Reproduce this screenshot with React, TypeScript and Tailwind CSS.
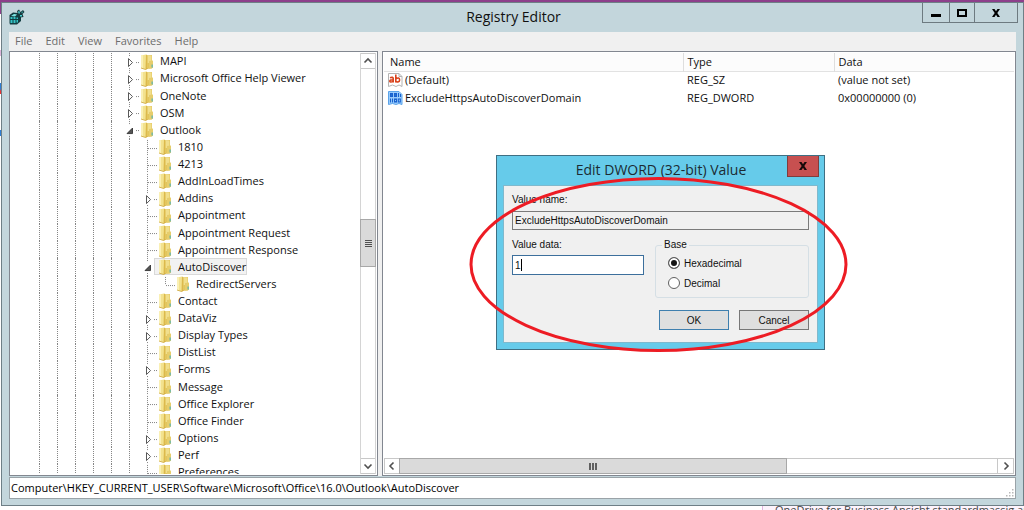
import { useState } from "react";
import type { ReactNode } from "react";

type Kind = "closed" | "open" | "leaf";
type Node = { name: string; level: number; kind: Kind; selected?: boolean; last?: boolean };

const nodes: Node[] = [
  { name: "MAPI", level: 0, kind: "closed" },
  { name: "Microsoft Office Help Viewer", level: 0, kind: "closed" },
  { name: "OneNote", level: 0, kind: "closed" },
  { name: "OSM", level: 0, kind: "closed" },
  { name: "Outlook", level: 0, kind: "open" },
  { name: "1810", level: 1, kind: "leaf" },
  { name: "4213", level: 1, kind: "leaf" },
  { name: "AddInLoadTimes", level: 1, kind: "leaf" },
  { name: "Addins", level: 1, kind: "closed" },
  { name: "Appointment", level: 1, kind: "leaf" },
  { name: "Appointment Request", level: 1, kind: "leaf" },
  { name: "Appointment Response", level: 1, kind: "leaf" },
  { name: "AutoDiscover", level: 1, kind: "open", selected: true },
  { name: "RedirectServers", level: 2, kind: "leaf", last: true },
  { name: "Contact", level: 1, kind: "leaf" },
  { name: "DataViz", level: 1, kind: "closed" },
  { name: "Display Types", level: 1, kind: "closed" },
  { name: "DistList", level: 1, kind: "leaf" },
  { name: "Forms", level: 1, kind: "closed" },
  { name: "Message", level: 1, kind: "leaf" },
  { name: "Office Explorer", level: 1, kind: "leaf" },
  { name: "Office Finder", level: 1, kind: "leaf" },
  { name: "Options", level: 1, kind: "closed" },
  { name: "Perf", level: 1, kind: "closed" },
  { name: "Preferences", level: 1, kind: "leaf" },
];

const values = [
  { name: "(Default)", type: "REG_SZ", data: "(value not set)", text: true },
  { name: "ExcludeHttpsAutoDiscoverDomain", type: "REG_DWORD", data: "0x00000000 (0)", text: false },
];

function Guide() {
  return (
    <span className="flex w-[18px] shrink-0 justify-center">
      <span className="border-l border-dotted border-[#858585]" />
    </span>
  );
}

function Joint({ kind, last }: { kind: Kind; last?: boolean }) {
  return (
    <svg className="h-full w-5 shrink-0" viewBox="0 1 20 17" aria-hidden="true">
      <g stroke="#858585" strokeDasharray="1 1" fill="none">
        {kind === "leaf" ? (
          <>
            <path d={last ? "M9.500 0V10" : "M9.500 0V19"} />
            <path d="M10 10.500H20" />
          </>
        ) : (
          <>
            <path d="M9.500 1V4M9.500 16V19" />
            <path d="M16 10.500H20" />
          </>
        )}
      </g>
      {kind === "closed" && <path d="M8.500 6.500V14.500L12.500 10.500Z" fill="#fff" stroke="#595959" />}
      {kind === "open" && <path d="M12.500 8V13.500H7Z" fill="#555" stroke="#262626" strokeWidth="0.800" />}
    </svg>
  );
}

function Folder() {
  return (
    <svg className="h-4 w-3.5 shrink-0" viewBox="0 0 14 16" aria-hidden="true">
      <path d="M5 1.500L12 1V14.500L5 15Z" fill="#e3c65c" />
      <path d="M6.500 1.500H11.500V9H6.500Z" fill="#f1df8d" />
      <path d="M1 1.500L6 0.500L7.500 1.500V14.500L5.500 15.500L1 14Z" fill="#f3e28e" />
      <path d="M1 1.500L3 1V14.500L1 14Z" fill="#faf0b4" />
      <path d="M6 0.500L7.500 1.500V14.500L5.500 15.500Z" fill="#dcb94c" />
      <path d="M1 14L5.500 15.500L7.500 14.500" stroke="#cba53b" fill="none" strokeWidth="0.800" />
      <path d="M9 7L13 6.500V14L9 14.500Z" fill="#e6cd6c" />
      <path d="M11.500 10.500H12.800V13.500H11.500Z" fill="#63b6b0" />
    </svg>
  );
}

function Chevron({ d }: { d: string }) {
  return (
    <svg className="size-2.5" viewBox="0 0 10 10" fill="none" stroke="#505050" strokeWidth="1.600" aria-hidden="true">
      <path d={d} />
    </svg>
  );
}

function ValueIcon({ text }: { text: boolean }) {
  return text ? (
    <svg className="size-4 shrink-0" viewBox="0 0 16 16" aria-hidden="true">
      <path d="M1.500 1.500H12L15 4.500V14.500L12 13L9 14.500L5.500 13L1.500 14.500Z" fill="#fff" stroke="#b4b4b4" />
      <path d="M12 1.500V4.500H15" fill="none" stroke="#b4b4b4" />
      <g fill="none" stroke="#d9421c" strokeWidth="1.600">
        <path d="M3 5.800Q6.200 4.600 6.200 6.600V10.500M6.200 7.800Q2.800 7.600 2.800 9.200Q3.200 10.800 6.200 9.400" />
        <path d="M8.800 2.500V10.500M8.800 6.800Q12.600 4.600 12.600 8Q12.400 11 8.800 9.400" />
      </g>
    </svg>
  ) : (
    <svg className="size-4 shrink-0" viewBox="0 0 16 16" aria-hidden="true">
      <path d="M1.500 1.500H12L15 4.500V14.500L12 13.500L9 14.500L5.500 13.500L1.500 14.500Z" fill="#9fd0fd" stroke="#5aa3ea" />
      <g fill="none" stroke="#1762cf" strokeWidth="1.100">
        <rect x="3.500" y="3.500" width="2" height="3" />
        <rect x="7.500" y="3.500" width="2" height="3" />
        <path d="M11.500 3V7M13.500 4V7M3.500 8.500V12.500M5.500 8.500V12.500" />
        <rect x="7.500" y="9" width="2" height="3" />
        <rect x="11.300" y="9" width="2" height="3" />
      </g>
    </svg>
  );
}

function RegeditIcon() {
  return (
    <svg className="size-4" viewBox="0 0 16 16" aria-hidden="true">
      <path d="M0.500 6L4 3.500L9 4L12 7V12L8 15.500H1L0.500 14Z" fill="#123c40" />
      <path d="M2 7L5 5L8 5.500L6 7.500Z" fill="#7fe6e4" />
      <path d="M1.500 8H3.500V10H1.500ZM4.500 8H6.500V10H4.500ZM1.500 11H3.500V14H1.500ZM4.500 11H6.500V14H4.500ZM7.500 8.500H9V10H7.500ZM7.500 11H9V13.500H7.500Z" fill="#35c4c6" />
      <path d="M8 2L10 0.500L11.500 3L14 1L15.500 3L13.500 5L14.500 8L11.500 8.500L9 6Z" fill="#173a3e" />
      <path d="M9 2.500L10.500 2L11 4.500L9.500 4.500ZM12.500 3L14 2.500L13 4.500ZM11 6H13V7.500H11Z" fill="#4ccfd0" />
    </svg>
  );
}

function CaptionButton({ label, className, children }: { label: string; className: string; children: ReactNode }) {
  return (
    <button type="button" aria-label={label} className={`flex items-center justify-center ${className}`}>
      {children}
    </button>
  );
}

function Tree() {
  return (
    <div className="flex w-[369px] shrink-0 border border-[#828790] bg-white p-px">
      <div className="min-h-0 min-w-0 flex-1 overflow-hidden">
        <ul className="grid h-[428px] auto-rows-fr pl-[19px]">
          {nodes.map((n) => (
            <li key={n.name} className="flex min-h-0 items-center">
              <span className="flex self-stretch">
                {Array.from({ length: 5 + n.level }, (_, i) => (
                  <Guide key={i} />
                ))}
              </span>
              <Joint kind={n.kind} last={n.last} />
              <span
                className={
                  n.selected
                    ? "-ml-1 flex h-[17px] items-center border border-[#d9d9d9] bg-[#f2f2f2] pl-[3px]"
                    : "flex h-[17px] items-center"
                }
              >
                <Folder />
                <span className="ml-1.5 whitespace-nowrap">{n.name}</span>
              </span>
            </li>
          ))}
        </ul>
      </div>
      <div className="flex w-4 shrink-0 flex-col border-x border-[#d4d4d4]">
        <div className="flex h-4 items-center justify-center border-y border-[#c8c8c8]">
          <Chevron d="M1.500 6.500L5 3L8.500 6.500" />
        </div>
        <div className="grow-[15]" />
        <div className="-mx-px flex h-12 flex-col items-center justify-center gap-px border border-[#a8a8a8] bg-[#dadada]">
          <i className="h-px w-[7px] bg-[#505050]" />
          <i className="h-px w-[7px] bg-[#505050]" />
          <i className="h-px w-[7px] bg-[#505050]" />
          <i className="h-px w-[7px] bg-[#505050]" />
        </div>
        <div className="grow-[19]" />
        <div className="flex h-4 items-center justify-center border-y border-[#c8c8c8]">
          <Chevron d="M1.500 3.500L5 7L8.500 3.500" />
        </div>
      </div>
    </div>
  );
}

function ValueList() {
  return (
    <div className="flex min-w-0 flex-1 flex-col border border-[#828790] bg-white p-px">
      <table className="w-full table-fixed text-left">
        <thead>
          <tr className="h-[18px] border-b border-[#e2e2e2] bg-[#fcfcfc]">
            <th className="w-[299px] border-r border-[#dedede] pl-1.5 font-normal">Name</th>
            <th className="w-[151px] border-r border-[#dedede] pl-1 font-normal">Type</th>
            <th className="pl-1 font-normal">Data</th>
          </tr>
        </thead>
        <tbody>
          {values.map((v) => (
            <tr key={v.name} className="h-[18px]">
              <td className="pl-[3px]">
                <span className="flex items-center gap-0.5">
                  <ValueIcon text={v.text} />
                  {v.name}
                </span>
              </td>
              <td className="pl-1">{v.type}</td>
              <td className="pl-1">{v.data}</td>
            </tr>
          ))}
        </tbody>
      </table>
      <div className="mt-auto flex h-4 border border-[#c8c8c8]">
        <div className="flex w-3.5 items-center justify-center">
          <Chevron d="M6.500 1.500L3 5L6.500 8.500" />
        </div>
        <div className="-my-px flex grow-[384] items-center justify-center gap-px border border-[#a8a8a8] bg-[#dadada]">
          <i className="h-[7px] w-0.5 bg-[#606060]" />
          <i className="h-[7px] w-0.5 bg-[#606060]" />
          <i className="h-[7px] w-0.5 bg-[#606060]" />
        </div>
        <div className="grow-[214]" />
        <div className="flex w-4 items-center justify-center border-l border-[#c8c8c8]">
          <Chevron d="M3.500 1.500L7 5L3.500 8.500" />
        </div>
      </div>
    </div>
  );
}

function EditDialog() {
  const [base, setBase] = useState("Hexadecimal");
  return (
    <div
      role="dialog"
      aria-labelledby="dialog-title"
      className="absolute top-[152px] left-[494px] w-[329px] border border-[#3f6f83] bg-[#66cbea] px-1.5 pb-1.5"
    >
      <header className="-mr-px flex h-[29px] items-start">
        <span className="w-8 shrink-0" />
        <h2 id="dialog-title" className="flex-1 pt-1 text-center text-[14px] leading-5 text-[#1c2b33]">
          Edit DWORD (32-bit) Value
        </h2>
        <CaptionButton label="Close" className="h-[21px] w-8 border border-t-0 border-[#803c3c] bg-[#c75050]">
          <svg className="size-2.5" viewBox="0 0 10 10" aria-hidden="true">
            <path d="M1 1H3.500L5 3.300L6.500 1H9L6.300 5L9 9H6.500L5 6.700L3.500 9H1L3.700 5Z" fill="#150808" />
          </svg>
        </CaptionButton>
      </header>
      <form
        onSubmit={(e) => e.preventDefault()}
        className="border border-[#7fb9cd] bg-[#f0f0f0] px-2 pt-1.5 pb-3 font-['Liberation_Sans',Arial,sans-serif] text-[10px] text-[#101010]"
      >
        <label htmlFor="value-name" className="block leading-4">Value name:</label>
        <input
          id="value-name"
          readOnly
          value="ExcludeHttpsAutoDiscoverDomain"
          className="mt-[3px] block h-[19px] w-full border border-[#7a7a7a] bg-[#f0f0f0] px-0.5"
        />
        <div className="mt-[7px] flex items-start justify-between">
          <div>
            <label htmlFor="value-data" className="block leading-4">Value data:</label>
            <div className="mt-0.5 flex h-5 w-[132px] items-center border border-[#3c6f9c] bg-white px-0.5">
              <input id="value-data" defaultValue="1" size={1} className="h-4 w-1.5 outline-none" />
              <span className="h-3 w-px bg-black" />
            </div>
          </div>
          <fieldset className="w-[154px] rounded-[3px] border border-[#d5dfe5] px-3 pb-1">
            <legend className="-ml-1.5 px-0.5 leading-4">Base</legend>
            {["Hexadecimal", "Decimal"].map((b) => (
              <label key={b} className="flex h-5 items-center gap-1">
                <input
                  type="radio"
                  name="base"
                  checked={base === b}
                  onChange={() => setBase(b)}
                  className="size-3 appearance-none rounded-full border border-[#606060] bg-white checked:bg-[#151515] checked:shadow-[inset_0_0_0_2px_#fff]"
                />
                {b}
              </label>
            ))}
          </fieldset>
        </div>
        <div className="mt-3 flex justify-end gap-2.5">
          <button type="submit" className="h-5 w-[70px] border border-[#3f7fae] bg-[#dfdfdf]">OK</button>
          <button type="button" className="h-5 w-[70px] border border-[#777] bg-[#dfdfdf]">Cancel</button>
        </div>
      </form>
      <svg
        className="pointer-events-none absolute top-5 -left-7 h-[177px] w-[380px]"
        viewBox="0 0 380 177"
        aria-hidden="true"
      >
        <ellipse cx="189.500" cy="88.500" rx="187.500" ry="86" fill="none" stroke="#ed1c24" strokeWidth="3" />
      </svg>
    </div>
  );
}

export default function App() {
  return (
    <div className="flex h-screen flex-col overflow-hidden bg-white bg-[linear-gradient(#8d3f8b_0_14px,#fff_14px_50px,#dcb4da_50px_56px,#fff_56px_83px,#2f7fd6_83px_89px,#e33_91px_94px,#fff_94px_130px,#2f7fd6_130px_136px,#fff_136px)] font-['Open_Sans','Noto_Sans',sans-serif] text-[11px] text-[#101010]">
      <div className="h-[2px] shrink-0 bg-[#8d3f8b]" />
      <main className="relative ml-px flex min-h-0 flex-1 flex-col border border-[#6e7f86] bg-[#c3d6dc] px-[7px] pb-1.5">
        <header className="flex h-[29px] shrink-0 items-start">
          <div className="flex w-24 pt-1.5">
            <RegeditIcon />
          </div>
          <h1 className="flex-1 pt-1 text-center text-[14px] leading-5">Registry Editor</h1>
          <div className="-mr-0.5 flex h-5 w-24 border border-t-0 border-[#6d7a80]">
            <CaptionButton label="Minimize" className="w-[27px] border-r border-[#6d7a80]">
              <i className="mt-1.5 h-[3px] w-2.5 bg-black" />
            </CaptionButton>
            <CaptionButton label="Maximize" className="w-[25px] border-r border-[#6d7a80]">
              <i className="h-2 w-2.5 border-2 border-black" />
            </CaptionButton>
            <CaptionButton label="Close" className="flex-1">
              <svg className="size-2.5" viewBox="0 0 10 10" aria-hidden="true">
                <path d="M1 1H3.500L5 3.300L6.500 1H9L6.300 5L9 9H6.500L5 6.700L3.500 9H1L3.700 5Z" fill="#000" />
              </svg>
            </CaptionButton>
          </div>
        </header>
        <nav className="flex h-[19px] shrink-0 items-center gap-[13px] bg-[#f0f0f0] pl-1.5 text-[#6d6d6d]">
          {["File", "Edit", "View", "Favorites", "Help"].map((m) => (
            <button key={m} type="button">{m}</button>
          ))}
        </nav>
        <div className="flex min-h-0 flex-1 gap-1 bg-[#f0f0f0]">
          <Tree />
          <ValueList />
        </div>
        <footer className="mt-px flex h-[22px] shrink-0 items-center border border-[#9aa3a8] bg-white pl-px">
          <span className="flex-1 text-black">
            Computer\HKEY_CURRENT_USER\Software\Microsoft\Office\16.0\Outlook\AutoDiscover
          </span>
          <svg className="size-2.5 self-end" viewBox="0 0 10 10" fill="#b8b8b8" aria-hidden="true">
            <path d="M7 1H8.500V2.500H7ZM7 4H8.500V5.500H7ZM7 7H8.500V8.500H7ZM4 4H5.500V5.500H4ZM4 7H5.500V8.500H4ZM1 7H2.500V8.500H1Z" />
          </svg>
        </footer>
        <EditDialog />
      </main>
      <div className="flex h-1 shrink-0 justify-end overflow-hidden bg-white">
        <p className="h-1 w-[262px] border-l border-[#e3b3e0] bg-[#fdf3fc] pl-3 leading-[8px] whitespace-nowrap text-[#444]">
          OneDrive for Business Ansicht standardmassig auf
        </p>
      </div>
    </div>
  );
}
